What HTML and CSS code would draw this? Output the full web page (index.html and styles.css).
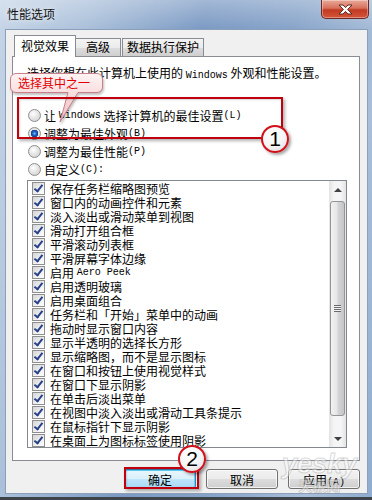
FILE: index.html
```html
<!DOCTYPE html>
<html lang="zh-CN">
<head>
    <meta charset="UTF-8">
    <meta name="viewport" content="width=device-width, initial-scale=1.0">
    <title>性能选项</title>
    <link rel="stylesheet" href="styles.css">
</head>
<body>
    <div class="window">
        <div class="titlebar">
            <span class="title">性能选项</span>
            <button class="close-btn">
                <svg width="17" height="11" viewBox="0 0 17 11">
                    <path d="M2 1 L6 1 L8.5 3.6 L11 1 L15 1 L10.6 5.5 L15 10 L11 10 L8.5 7.4 L6 10 L2 10 L6.4 5.5 Z" fill="#fff" stroke="#5a2a22" stroke-width="1" stroke-linejoin="round"/>
                </svg>
            </button>
        </div>

        <div class="client">
            <div class="tabs">
                <div class="tab active">视觉效果</div>
                <div class="tab tab-adv">高级</div>
                <div class="tab tab-dep">数据执行保护</div>
            </div>

            <div class="panel">
                <p class="intro">选择你想在此计算机上使用的 <span class="en">Windows</span> 外观和性能设置。</p>

                <div class="radios">
                    <div class="radio-row"><span class="radio"></span>让 <span class="en">Windows</span> 选择计算机的最佳设置<span class="en">(L)</span></div>
                    <div class="radio-row"><span class="radio on"></span>调整为最佳外观<span class="en">(B)</span></div>
                    <div class="radio-row"><span class="radio"></span>调整为最佳性能<span class="en">(P)</span></div>
                    <div class="radio-row"><span class="radio"></span>自定义<span class="en">(C):</span></div>
                </div>

                <div class="listbox">
                    <ul class="items">
                        <li><span class="check"></span>保存任务栏缩略图预览</li>
                        <li><span class="check"></span>窗口内的动画控件和元素</li>
                        <li><span class="check"></span>淡入淡出或滑动菜单到视图</li>
                        <li><span class="check"></span>滑动打开组合框</li>
                        <li><span class="check"></span>平滑滚动列表框</li>
                        <li><span class="check"></span>平滑屏幕字体边缘</li>
                        <li><span class="check"></span>启用 <span class="en">Aero Peek</span></li>
                        <li><span class="check"></span>启用透明玻璃</li>
                        <li><span class="check"></span>启用桌面组合</li>
                        <li><span class="check"></span>任务栏和「开始」菜单中的动画</li>
                        <li><span class="check"></span>拖动时显示窗口内容</li>
                        <li><span class="check"></span>显示半透明的选择长方形</li>
                        <li><span class="check"></span>显示缩略图，而不是显示图标</li>
                        <li><span class="check"></span>在窗口和按钮上使用视觉样式</li>
                        <li><span class="check"></span>在窗口下显示阴影</li>
                        <li><span class="check"></span>在单击后淡出菜单</li>
                        <li><span class="check"></span>在视图中淡入淡出或滑动工具条提示</li>
                        <li><span class="check"></span>在鼠标指针下显示阴影</li>
                        <li><span class="check"></span>在桌面上为图标标签使用阴影</li>
                    </ul>
                    <div class="scrollbar">
                        <div class="scroll-btn"><span class="arrow-up"></span></div>
                        <div class="thumb"><span class="grip"></span></div>
                        <div class="track"></div>
                        <div class="scroll-btn"><span class="arrow-down"></span></div>
                    </div>
                </div>
            </div>

            <div class="buttons">
                <button class="win-btn default">确定</button>
                <button class="win-btn">取消</button>
                <button class="win-btn">应用<span class="en">(A)</span></button>
            </div>
        </div>

        <!-- annotations on top of the dialog -->
        <div class="callout">
            <svg class="callout-shape" width="100" height="56" viewBox="0 0 100 56">
                <defs>
                    <linearGradient id="pink" x1="0" y1="0" x2="0" y2="1">
                        <stop offset="0" stop-color="#fff4f4"/>
                        <stop offset="1" stop-color="#efbcc0"/>
                    </linearGradient>
                </defs>
                <path d="M6 0.5 H87 A5.5 5.5 0 0 1 92.5 6 V14 A5.5 5.5 0 0 1 87 19.5 H68 L50 49 L58 19.5 H6 A5.5 5.5 0 0 1 0.5 14 V6 A5.5 5.5 0 0 1 6 0.5 Z" fill="url(#pink)" stroke="#c98088" stroke-width="1"/>
            </svg>
            <span class="callout-text">选择其中之一</span>
        </div>
        <div class="mark mark-radios"></div>
        <div class="mark mark-ok"></div>
        <div class="badge badge-1">1</div>
        <div class="badge badge-2">2</div>
        <div class="watermark">
            <span class="wm-en">yesky</span>
            <span class="wm-cn">天极网</span>
        </div>
    </div>
</body>
</html>
```

FILE: styles.css
```css
body {
    margin: 0;
    width: 372px;
    height: 500px;
    overflow: hidden;
    font-family: "Noto Sans CJK SC", "Noto Sans", sans-serif;
    font-size: 12px;
    color: #000;
}
.window {
    position: relative;
    width: 372px;
    height: 500px;
    box-sizing: border-box;
    background:
        linear-gradient(0deg, #3e434a 0, #3e434a 3px, transparent 3px),
        linear-gradient(180deg, rgba(255, 255, 255, 0.3), rgba(255, 255, 255, 0) 30px),
        linear-gradient(100deg, #c6d5e7 0%, #a9bfd9 20%, #7a99c3 45%, #86a3c9 65%, #a8bed9 85%, #8eaccf 100%);
}
.titlebar {
    height: 29px;
    display: flex;
    align-items: flex-start;
}
.title {
    padding: 5px 0 0 7px;
    line-height: 18px;
    font-size: 12px;
    color: #111;
    text-shadow: 0 0 6px rgba(255, 255, 255, 0.9);
}
.close-btn {
    margin-left: auto;
    margin-right: 3px;
    width: 48px;
    height: 19px;
    padding: 0;
    border: 1px solid #6b2a25;
    border-top: none;
    border-radius: 0 0 5px 5px;
    background: linear-gradient(180deg, #e9a99a 0%, #d8705c 45%, #c13a22 55%, #d4553a 100%);
    box-shadow: inset 0 0 0 1px rgba(255, 255, 255, 0.35);
    display: flex;
    align-items: center;
    justify-content: center;
}
.client {
    margin-left: 5px;
    width: 363px;
    height: 465px;
    box-sizing: border-box;
    border: 1px solid #8b9fba;
    background: #f0f0f0;
    padding: 5px 7px 0 6px;
}
.tabs {
    display: flex;
    align-items: flex-end;
    height: 21px;
    padding-left: 2px;
}
.tab {
    box-sizing: border-box;
    height: 18px;
    line-height: 16px;
    border: 1px solid #898c95;
    border-bottom: none;
    background: linear-gradient(180deg, #f3f3f3 0%, #ebebeb 50%, #dddddd 51%, #cfcfcf 100%);
    text-align: center;
    margin-left: -1px;
}
.tab.active {
    position: relative;
    z-index: 1;
    height: 22px;
    margin-bottom: -1px;
    line-height: 20px;
    width: 62px;
    background: #fff;
    margin-left: 0;
}
.tab-adv {
    width: 46px;
}
.tab-dep {
    width: 82px;
    margin-left: 1px;
}
.panel {
    box-sizing: border-box;
    width: 348px;
    height: 405px;
    border: 1px solid #898c95;
    background: #fff;
    padding: 9px 0 0 14px;
}
.intro {
    margin: 0;
    line-height: 14px;
    white-space: nowrap;
}
.en {
    font-family: "Liberation Mono", monospace;
    font-size: 10px;
}
.radios {
    margin-top: 23px;
}
.radio-row {
    display: flex;
    align-items: center;
    height: 18px;
    padding-left: 1px;
    white-space: pre;
}
.radio {
    box-sizing: border-box;
    width: 13px;
    height: 13px;
    margin-right: 3px;
    border: 1px solid #8e8f8f;
    border-radius: 50%;
    background: radial-gradient(circle at 40% 35%, #ffffff 0, #e6e6e6 45%, #c9c9c9 100%);
}
.radio.on {
    background: radial-gradient(circle at 50% 50%, #7fc0ff 0, #2a6fd0 1.5px, #0d3d8f 3.5px, #e8e8e8 4px, #d0d0d0 100%);
}
.listbox {
    margin-top: 2px;
    width: 320px;
    height: 268px;
    box-sizing: border-box;
    border: 1px solid #828790;
    display: flex;
}
.items {
    list-style: none;
    margin: 0;
    padding: 0 0 0 4px;
    flex: 1;
}
.items li {
    display: flex;
    align-items: center;
    height: 14px;
    white-space: pre;
}
.check {
    position: relative;
    box-sizing: border-box;
    width: 13px;
    height: 13px;
    margin-right: 5px;
    border: 1px solid #8e8f8f;
    background: linear-gradient(135deg, #d6d6d6 0%, #f4f4f4 70%, #ffffff 100%);
}
.check::after {
    content: "";
    position: absolute;
    left: 3px;
    top: 0px;
    width: 3px;
    height: 7px;
    border: solid #27428a;
    border-width: 0 2px 2px 0;
    transform: rotate(38deg);
}
.scrollbar {
    width: 17px;
    display: flex;
    flex-direction: column;
    background: linear-gradient(90deg, #e3e3e3 0%, #f5f5f5 30%, #f5f5f5 70%, #e3e3e3 100%);
}
.scroll-btn {
    height: 17px;
    display: flex;
    align-items: center;
    justify-content: center;
}
.arrow-up, .arrow-down {
    width: 0;
    height: 0;
    border-left: 4px solid transparent;
    border-right: 4px solid transparent;
}
.arrow-up {
    border-bottom: 4px solid #404040;
}
.arrow-down {
    border-top: 4px solid #404040;
}
.thumb {
    margin: 3px 1px 0 1px;
    height: 215px;
    box-sizing: border-box;
    border: 1px solid #959595;
    border-radius: 3px;
    background: linear-gradient(90deg, #f2f2f2 0%, #e6e6e6 45%, #d4d4d4 55%, #c6c6c6 100%);
    display: flex;
    align-items: center;
    justify-content: center;
}
.grip {
    width: 7px;
    height: 7px;
    background: repeating-linear-gradient(180deg, #6a6a6a 0, #6a6a6a 1px, #f2f2f2 1px, #f2f2f2 2px);
}
.track {
    flex: 1;
}
.buttons {
    display: flex;
    justify-content: flex-end;
    gap: 10px;
    margin-top: 8px;
    padding-right: 0;
}
.win-btn {
    width: 72px;
    height: 20px;
    padding: 0;
    border: 1px solid #707070;
    border-radius: 3px;
    background: linear-gradient(180deg, #f2f2f2 0%, #ebebeb 50%, #dddddd 51%, #cfcfcf 100%);
    font-family: "Noto Sans CJK SC", sans-serif;
    font-size: 12px;
    color: #000;
    box-shadow: inset 0 0 0 1px rgba(255, 255, 255, 0.7);
}
.win-btn.default {
    border-color: #3c7fb1;
    background: linear-gradient(180deg, #eaf6fd 0%, #d9f0fc 50%, #bee6fd 51%, #a7d9f5 100%);
    box-shadow: inset 0 0 0 1px #5fd3ff;
}
.callout {
    position: absolute;
    left: 10px;
    top: 73px;
    width: 100px;
    height: 56px;
}
.callout-shape {
    position: absolute;
    left: 0;
    top: 0;
    filter: drop-shadow(1px 2px 1px rgba(0, 0, 0, 0.25));
}
.callout-text {
    position: absolute;
    left: 8px;
    top: 2px;
    line-height: 16px;
    font-size: 12px;
    color: #e00000;
}
.mark {
    position: absolute;
    border: 2px solid #c0000c;
    box-shadow: 2px 2px 3px rgba(0, 0, 0, 0.3), inset 1px 1px 2px rgba(0, 0, 0, 0.15);
}
.mark-radios {
    left: 17px;
    top: 97px;
    width: 262px;
    height: 38px;
}
.mark-ok {
    left: 124px;
    top: 467px;
    width: 71px;
    height: 18px;
}
.badge {
    position: absolute;
    width: 28px;
    height: 28px;
    box-sizing: border-box;
    border: 2px solid #d0101a;
    border-radius: 50%;
    background: radial-gradient(circle at 40% 30%, #ffffff 0%, #f4f4f4 55%, #d8d8d8 100%);
    box-shadow: 2px 2px 3px rgba(0, 0, 0, 0.35);
    font-family: "Liberation Sans", Arial, sans-serif;
    font-size: 21px;
    line-height: 24px;
    text-align: center;
    color: #000;
}
.badge-1 {
    left: 261px;
    top: 125px;
}
.badge-2 {
    left: 178px;
    top: 445px;
}
.watermark {
    position: absolute;
    left: 282px;
    top: 451px;
    display: flex;
    flex-direction: column;
    align-items: center;
    pointer-events: none;
}
.wm-en {
    font-family: "Liberation Sans", Arial, sans-serif;
    font-size: 27px;
    font-weight: bold;
    font-style: italic;
    line-height: 26px;
    color: rgba(255, 255, 255, 0.45);
    -webkit-text-stroke: 1px rgba(140, 140, 140, 0.35);
}
.wm-cn {
    font-size: 14px;
    line-height: 16px;
    font-weight: bold;
    color: rgba(255, 255, 255, 0.45);
    -webkit-text-stroke: 1px rgba(140, 140, 140, 0.35);
}
```
